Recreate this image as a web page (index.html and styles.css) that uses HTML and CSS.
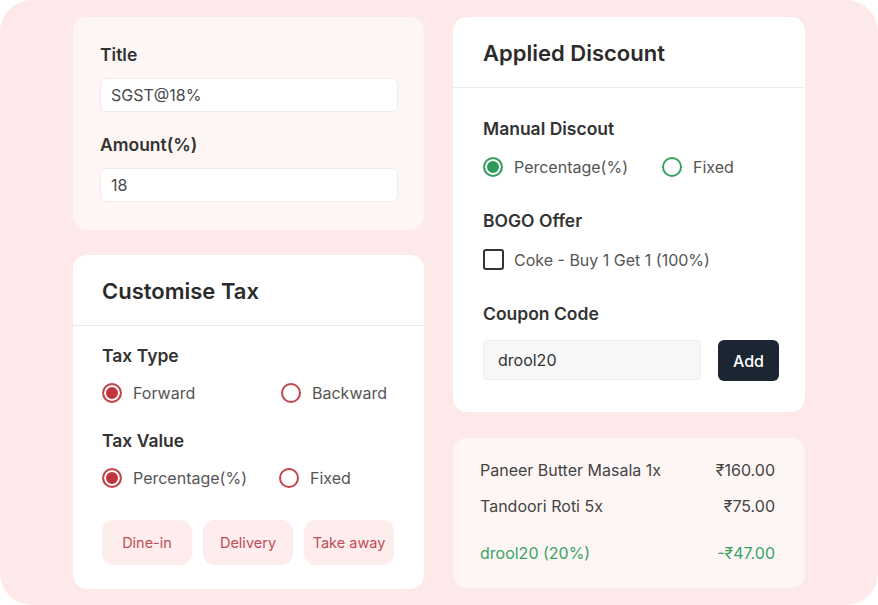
FILE: index.html
```html
<!DOCTYPE html>
<html>
<head>
<meta charset="utf-8">
<link rel="stylesheet" href="styles.css">
</head>
<body>
<div class="frame">
  <div class="col">
    <div class="card soft card-form">
      <div class="label">Title</div>
      <div class="input">SGST@18%</div>
      <div class="label gap-top">Amount(%)</div>
      <div class="input">18</div>
    </div>
    <div class="card card-tax">
      <div class="card-head">Customise Tax</div>
      <div class="card-body tax-body">
        <div class="label">Tax Type</div>
        <div class="options">
          <div class="opt"><span class="radio red checked"></span>Forward</div>
          <div class="opt"><span class="radio red"></span>Backward</div>
        </div>
        <div class="label sect">Tax Value</div>
        <div class="options">
          <div class="opt"><span class="radio red checked"></span>Percentage(%)</div>
          <div class="opt opt-alt"><span class="radio red"></span>Fixed</div>
        </div>
        <div class="chips">
          <div class="chip">Dine-in</div>
          <div class="chip">Delivery</div>
          <div class="chip">Take away</div>
        </div>
      </div>
    </div>
  </div>
  <div class="col">
    <div class="card card-disc">
      <div class="card-head">Applied Discount</div>
      <div class="card-body disc-body">
        <div class="label">Manual Discout</div>
        <div class="options opts-disc">
          <div class="opt"><span class="radio green checked"></span>Percentage(%)</div>
          <div class="opt"><span class="radio green"></span>Fixed</div>
        </div>
        <div class="label sect2">BOGO Offer</div>
        <div class="opt check-row"><span class="checkbox"></span>Coke - Buy 1 Get 1 (100%)</div>
        <div class="label sect2">Coupon Code</div>
        <div class="coupon">
          <div class="coupon-input">drool20</div>
          <div class="btn">Add</div>
        </div>
      </div>
    </div>
    <div class="card soft card-sum">
      <div class="row"><span>Paneer Butter Masala 1x</span><span>₹160.00</span></div>
      <div class="row row2"><span>Tandoori Roti 5x</span><span>₹75.00</span></div>
      <div class="row row3 green-text"><span>drool20 (20%)</span><span>-₹47.00</span></div>
    </div>
  </div>
</div>
</body>
</html>
```

FILE: styles.css
```css
* { box-sizing: border-box; }
html, body { margin: 0; padding: 0; background: #ffffff; }
body {
  font-family: Inter, "Noto Sans", "Liberation Sans", sans-serif;
  color: #444;
}
.frame {
  width: 878px;
  height: 605px;
  background: #fde9e9;
  border-radius: 32px;
  padding: 17px 0 0 73px;
  display: flex;
  gap: 29px;
  overflow: hidden;
}
.col {
  display: flex;
  flex-direction: column;
  width: 351px;
}
.col + .col { width: 352px; }
.card {
  background: #ffffff;
  border-radius: 14px;
}
.soft { background: #fdf6f5; }

.label {
  font-size: 17.5px;
  line-height: 20px;
  font-weight: 600;
  color: #333;
}

/* card 1 */
.card-form {
  height: 213px;
  padding: 28px 26px 0 27px;
}
.input {
  margin-top: 13px;
  height: 34px;
  background: #fff;
  border: 1px solid #eeeaea;
  border-radius: 6px;
  font-size: 16px;
  line-height: 32px;
  padding-left: 10px;
  color: #4a4a4a;
}
.label.gap-top { margin-top: 23px; }

/* headers */
.card-head {
  padding: 24px 0 22px 29px;
  font-size: 22px;
  line-height: 24px;
  font-weight: 600;
  color: #2b2b2b;
  border-bottom: 1px solid #ececec;
}
.card-disc .card-head { padding-left: 30px; }

/* tax card */
.card-tax {
  margin-top: 25px;
  height: 334px;
}
.tax-body { padding: 20px 0 0 29px; }
.options {
  display: flex;
  margin-top: 17px;
  height: 20px;
}
.opt {
  display: flex;
  align-items: center;
  font-size: 16px;
  line-height: 20px;
  color: #555;
}
.options .opt:first-child { width: 179px; }
.opt-alt { margin-left: -2px; }
.radio {
  width: 20px;
  height: 20px;
  border-radius: 50%;
  border: 2px solid #c4444e;
  margin-right: 11px;
  flex-shrink: 0;
}
.radio.red.checked {
  background: #c3343f;
  box-shadow: inset 0 0 0 2px #fff;
}
.radio.green { border-color: #3a9f63; }
.radio.green.checked {
  background: #2f9a5a;
  box-shadow: inset 0 0 0 2px #fff;
}
.label.sect { margin-top: 28px; }
.chips {
  display: flex;
  gap: 11px;
  margin-top: 32px;
}
.chip {
  width: 90px;
  height: 45px;
  border-radius: 11px;
  background: #fdeded;
  color: #c24c58;
  font-size: 14.5px;
  display: flex;
  align-items: center;
  justify-content: center;
}

/* discount card */
.card-disc { height: 395px; }
.disc-body { padding: 31px 0 0 30px; }
.opts-disc { margin-top: 18px; }
.label.sect2 { margin-top: 34px; }
.check-row { margin-top: 18px; }
.checkbox {
  width: 21px;
  height: 21px;
  border: 2px solid #333;
  border-radius: 3px;
  margin-right: 10px;
}
.coupon {
  display: flex;
  gap: 17px;
  margin-top: 16px;
}
.coupon-input {
  width: 218px;
  height: 40px;
  background: #f7f7f7;
  border: 1px solid #eeeeee;
  border-radius: 4px;
  font-size: 16px;
  line-height: 38px;
  padding-left: 14px;
  color: #333;
}
.btn {
  width: 61px;
  height: 41px;
  background: #1c2632;
  color: #fff;
  border-radius: 6px;
  font-size: 16px;
  font-weight: 500;
  display: flex;
  align-items: center;
  justify-content: center;
}

/* summary */
.card-sum {
  margin-top: 26px;
  height: 150px;
  padding: 22px 30px 0 27px;
}
.row {
  display: flex;
  justify-content: space-between;
  font-size: 16px;
  line-height: 20px;
  color: #444;
}
.row2 { margin-top: 16px; }
.row3 { margin-top: 27px; }
.green-text { color: #3aa366; }
```
